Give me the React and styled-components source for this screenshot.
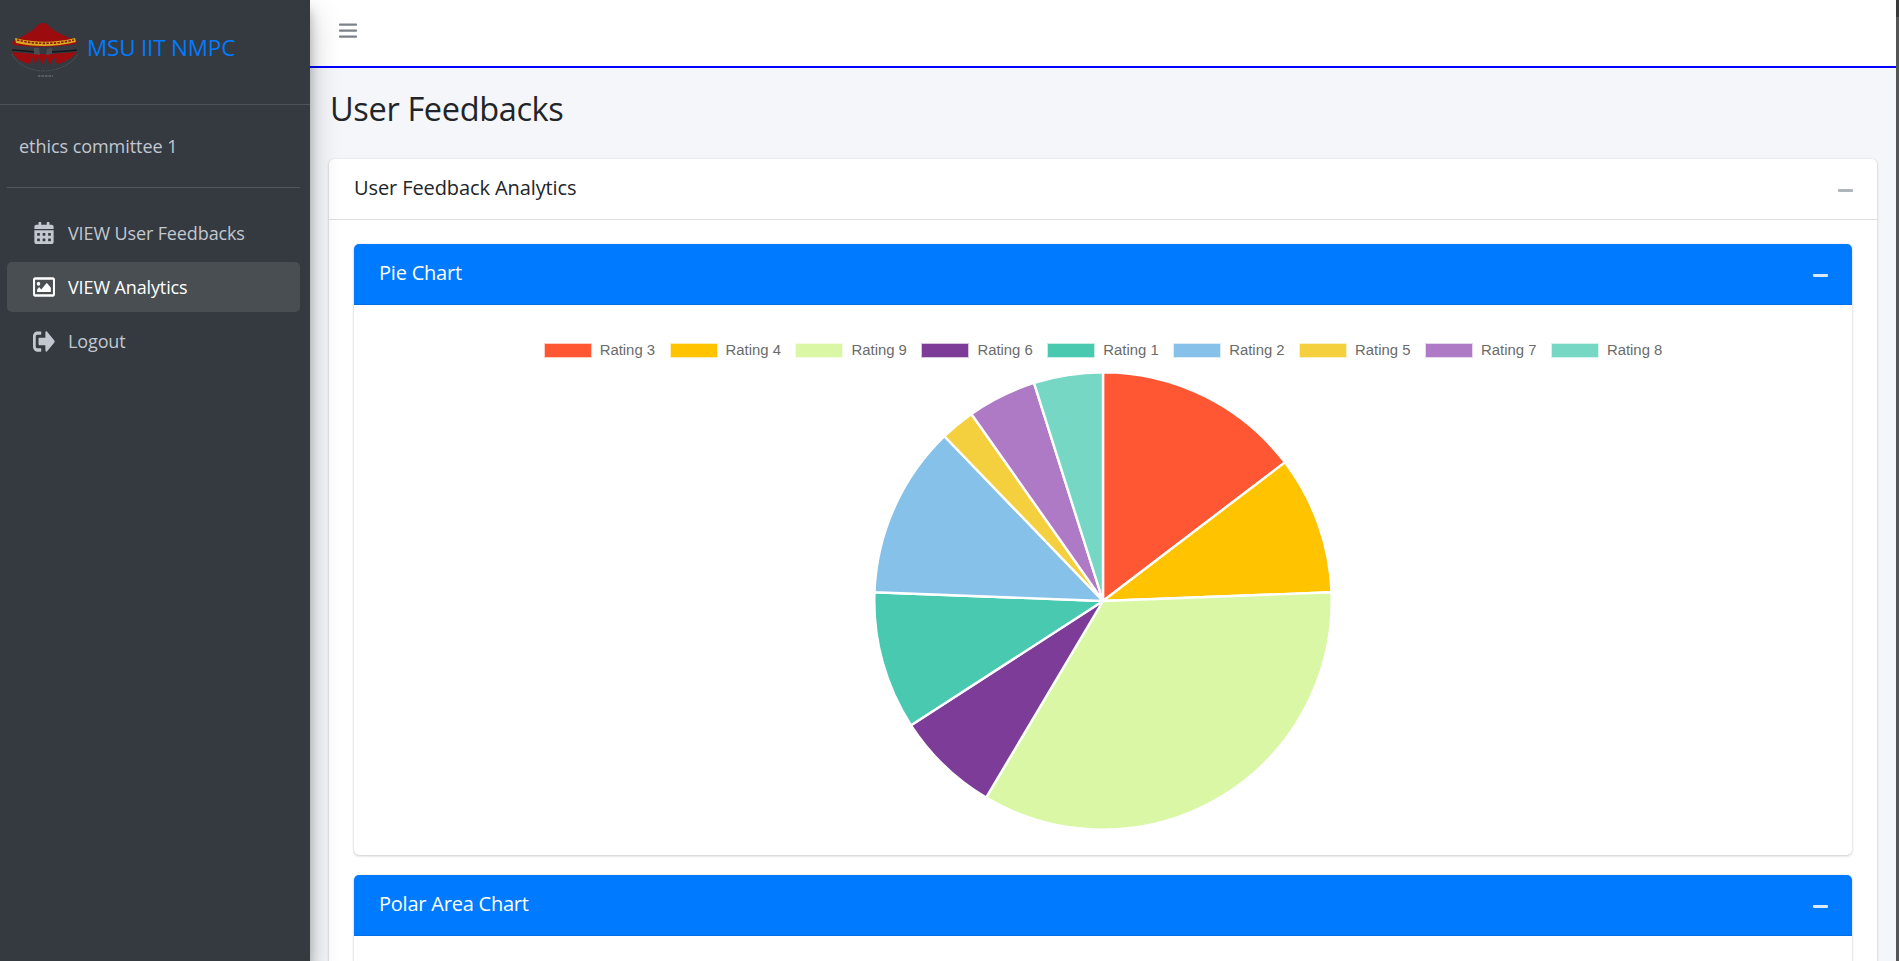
import React from 'react'
import styled, {createGlobalStyle} from 'styled-components'
import {FaCalendarAlt, FaMinus, FaRegImage, FaSignOutAlt} from 'react-icons/fa'

const uiFont = `'Open Sans', 'Noto Sans', 'Liberation Sans', sans-serif`

const GlobalStyle = createGlobalStyle`
  html, body {
    margin: 0;
    height: 100%;
    overflow: hidden;
  }
  body {
    font-family: ${uiFont};
    background: #f4f6f9;
    color: #212529;
  }
`

const Shell = styled.div`
  display: flex;
  height: 100vh;
  overflow: hidden;
`

const Sidebar = styled.aside`
  flex: 0 0 310px;
  display: flex;
  flex-direction: column;
  background: #343a40;
  box-shadow: 0 14px 28px rgba(0, 0, 0, 0.25), 0 10px 10px rgba(0, 0, 0, 0.22);
  position: relative;
  z-index: 5;
`

const Brand = styled.div`
  height: 105px;
  box-sizing: border-box;
  display: flex;
  align-items: center;
  gap: 9px;
  padding: 0 0 10px 8px;
  border-bottom: 1px solid #4b545c;
`

const BrandName = styled.span`
  color: #007bff;
  font-size: 22.5px;
  font-weight: 400;
  letter-spacing: -0.2px;
`

const UserName = styled.div`
  height: 82px;
  margin: 0 10px 0 7px;
  padding-left: 12px;
  display: flex;
  align-items: center;
  color: #c2c7d0;
  font-size: 18px;
  letter-spacing: -0.05px;
  border-bottom: 1px solid #4f5962;
`

const Nav = styled.nav`
  display: flex;
  flex-direction: column;
  gap: 4px;
  margin: 20px 10px 0 7px;
`

const NavItem = styled.a`
  height: 50px;
  display: flex;
  align-items: center;
  gap: 13px;
  padding-left: 26px;
  border-radius: 5px;
  font-size: 18px;
  letter-spacing: -0.12px;
  font-weight: ${p => (p.$active ? 500 : 400)};
  color: ${p => (p.$active ? '#fff' : '#c2c7d0')};
  background: ${p => (p.$active ? '#494e53' : 'transparent')};
  svg {
    width: 22px;
    height: ${p => p.$iconHeight || 22}px;
  }
`

const Main = styled.div`
  flex: 1;
  min-width: 0;
  display: flex;
  flex-direction: column;
`

const TopBar = styled.header`
  flex: none;
  height: 60px;
  display: flex;
  align-items: center;
  padding: 0 0 6px 29px;
  background: #fff;
  border-bottom: 2px solid #0000ff;
`

const Content = styled.main`
  padding: 0 19px;
`

const PageTitle = styled.h1`
  margin: 0;
  height: 91px;
  display: flex;
  align-items: center;
  padding-left: 1px;
  padding-bottom: 11px;
  box-sizing: border-box;
  font-size: 32.5px;
  font-weight: 400;
  letter-spacing: -0.35px;
`

const Card = styled.section`
  background: #fff;
  border-radius: 5px;
  box-shadow: 0 0 1px rgba(0, 0, 0, 0.125), 0 1px 3px rgba(0, 0, 0, 0.2);
`

const CardHeader = styled.div`
  height: 60px;
  display: flex;
  align-items: center;
  justify-content: space-between;
  padding: 0 24px 0 25px;
  font-size: 20px;
  letter-spacing: ${p => (p.$primary ? '-0.22px' : '-0.1px')};
  border-radius: 5px 5px 0 0;
  border-bottom: 1px solid ${p => (p.$primary ? '#006fe6' : 'rgba(0, 0, 0, 0.125)')};
  color: ${p => (p.$primary ? '#fff' : '#212529')};
  background: ${p => (p.$primary ? '#007bff' : 'transparent')};
  svg {
    width: 15px;
    height: 15px;
    margin-top: 2px;
    color: ${p => (p.$primary ? '#dbe9ff' : '#adb5bd')};
  }
`

const CardTitle = styled.span`
  padding-bottom: 4px;
`

const CardBody = styled.div`
  padding: 24px 25px 25px;
  display: flex;
  flex-direction: column;
  gap: 20px;
`

const ChartBody = styled.div`
  display: flex;
  flex-direction: column;
  align-items: center;
  padding-top: 35px;
  height: 550px;
  box-sizing: border-box;
`

const Legend = styled.ul`
  list-style: none;
  margin: 0 0 11px;
  padding: 0;
  display: flex;
  gap: 14.5px;
  font-family: 'Liberation Sans', Arial, sans-serif;
  font-size: 14.88px;
  line-height: 20px;
  color: #6b6b6b;
`

const LegendItem = styled.li`
  display: flex;
  align-items: center;
  gap: 8px;
`

const Swatch = styled.span`
  width: 48px;
  height: 15px;
  box-sizing: border-box;
  background: ${p => p.$color};
  border: 1px solid rgba(255, 255, 255, 0.7);
`

const ScrollStrip = styled.div`
  flex: 0 0 3px;
  background: linear-gradient(#3a3a3a 17px, #555 17px);
`

const ratings = [
  {label: 'Rating 3', value: 6, color: '#FF5733'},
  {label: 'Rating 4', value: 4, color: '#FFC300'},
  {label: 'Rating 9', value: 14, color: '#DAF7A6'},
  {label: 'Rating 6', value: 3, color: '#7D3C98'},
  {label: 'Rating 1', value: 4, color: '#48C9B0'},
  {label: 'Rating 2', value: 5, color: '#85C1E9'},
  {label: 'Rating 5', value: 1, color: '#F4D03F'},
  {label: 'Rating 7', value: 2, color: '#AF7AC5'},
  {label: 'Rating 8', value: 2, color: '#76D7C4'},
]

const PieChart = () => {
  const total = ratings.reduce((sum, r) => sum + r.value, 0)
  const r = 228.7
  const c = 230
  let angle = 0
  const point = a => `${c + r * Math.sin(a)} ${c - r * Math.cos(a)}`
  return (
    <svg width="460" height="460" viewBox="0 0 460 460">
      {ratings.map(item => {
        const start = angle
        angle += (item.value / total) * Math.PI * 2
        const large = angle - start > Math.PI ? 1 : 0
        return (
          <path
            key={item.label}
            d={`M${c} ${c} L${point(start)} A${r} ${r} 0 ${large} 1 ${point(angle)} Z`}
            fill={item.color}
            stroke="#fff"
            strokeWidth="2.4"
            strokeLinejoin="round"
          />
        )
      })}
    </svg>
  )
}

const MenuIcon = () => (
  <svg width="18" height="15" viewBox="0 0 18 15" fill="#7b8289">
    <rect y="0.4" width="18" height="2.3" rx="0.8" />
    <rect y="6.4" width="18" height="2.3" rx="0.8" />
    <rect y="12.4" width="18" height="2.3" rx="0.8" />
  </svg>
)

// coordinates are page pixels, the svg sits at 8,16
const Logo = () => (
  <svg width="70" height="62" viewBox="8 16 70 62">
    <path d="M12 42 C22 36 32 32 37 26 C40 22 46 22 49 26 C54 32 66 36 77 41 L76 44 C60 47 30 48 13 45 Z" fill="#9c0c0e" />
    <path d="M15 38 C35 43 55 43 75 38 L76 42 C55 47 35 47 16 43 Z" fill="#d9a91f" />
    <path d="M17 40 C35 44.5 55 44.5 74 40" stroke="#8a1a10" strokeWidth="1.6" strokeDasharray="2.5 1.2" fill="none" />
    <path d="M12 50 C20 50.5 28 51 34 52 M50 52 C60 51.5 70 51 77 50" stroke="#17181a" strokeWidth="1.3" fill="none" />
    <path d="M12 52 C16 60 24 63 30 64 L32 57 L35 64 L39 57 L42 65 L46 57 L50 65 L54 57 L57 64 C66 62 72 58 77 52 C68 53 60 53 52 54 L34 54 C28 53 20 53 12 52 Z" fill="#9c0c0e" />
    <path d="M34 48 L39 48 L40 55 L34 54 Z M47 49 L52 48 L52 54 L46 55 Z" fill="#4a4d52" />
    <path d="M12 54 C18 66 32 71 44 71 C58 71 72 64 78 54" stroke="#5a5d61" strokeWidth="0.8" strokeDasharray="1.5 1" fill="none" />
    <path d="M38 76 L53 76" stroke="#5a5d61" strokeWidth="2" strokeDasharray="2.5 1" />
  </svg>
)

const ChartCard = ({title, children}) => (
  <Card>
    <CardHeader $primary>
      <CardTitle>{title}</CardTitle>
      <FaMinus preserveAspectRatio="none" />
    </CardHeader>
    {children}
  </Card>
)

export default function App() {
  return (
    <Shell>
      <GlobalStyle />
      <Sidebar>
        <Brand>
          <Logo />
          <BrandName>MSU IIT NMPC</BrandName>
        </Brand>
        <UserName>ethics committee 1</UserName>
        <Nav>
          <NavItem>
            <FaCalendarAlt />
            VIEW User Feedbacks
          </NavItem>
          <NavItem $active $iconHeight={26}>
            <FaRegImage preserveAspectRatio="none" />
            VIEW Analytics
          </NavItem>
          <NavItem $iconHeight={27}>
            <FaSignOutAlt preserveAspectRatio="none" />
            Logout
          </NavItem>
        </Nav>
      </Sidebar>
      <Main>
        <TopBar>
          <MenuIcon />
        </TopBar>
        <Content>
          <PageTitle>User Feedbacks</PageTitle>
          <Card>
            <CardHeader>
              <CardTitle>User Feedback Analytics</CardTitle>
              <FaMinus preserveAspectRatio="none" />
            </CardHeader>
            <CardBody>
              <ChartCard title="Pie Chart">
                <ChartBody>
                  <Legend>
                    {ratings.map(item => (
                      <LegendItem key={item.label}>
                        <Swatch $color={item.color} />
                        {item.label}
                      </LegendItem>
                    ))}
                  </Legend>
                  <PieChart />
                </ChartBody>
              </ChartCard>
              <ChartCard title="Polar Area Chart">
                <ChartBody />
              </ChartCard>
            </CardBody>
          </Card>
        </Content>
      </Main>
      <ScrollStrip />
    </Shell>
  )
}
